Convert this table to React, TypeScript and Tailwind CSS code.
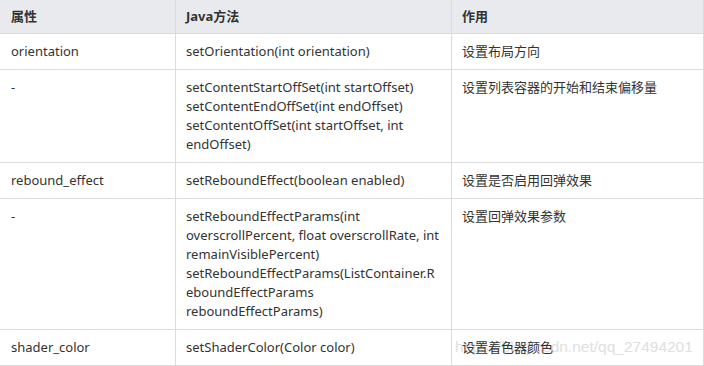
const rows: { attr: string; method: string[]; desc: string }[] = [
  { attr: 'orientation', method: ['setOrientation(int orientation)'], desc: '设置布局方向' },
  {
    attr: '-',
    method: [
      'setContentStartOffSet(int startOffset)',
      'setContentEndOffSet(int endOffset)',
      'setContentOffSet(int startOffset, int',
      'endOffset)',
    ],
    desc: '设置列表容器的开始和结束偏移量',
  },
  { attr: 'rebound_effect', method: ['setReboundEffect(boolean enabled)'], desc: '设置是否启用回弹效果' },
  {
    attr: '-',
    method: [
      'setReboundEffectParams(int',
      'overscrollPercent, float overscrollRate, int',
      'remainVisiblePercent)',
      'setReboundEffectParams(ListContainer.R',
      'eboundEffectParams',
      'reboundEffectParams)',
    ],
    desc: '设置回弹效果参数',
  },
  { attr: 'shader_color', method: ['setShaderColor(Color color)'], desc: '设置着色器颜色' },
];

const cell = 'px-[10px] py-2 border-r border-b border-[#dcdcdc]';

export default function App() {
  return (
    <div
      className="w-[704px] h-[366px] bg-white text-[13px] leading-[19px] text-[#333] overflow-hidden relative"
      style={{ fontFamily: '"Noto Sans", "Noto Sans CJK SC", sans-serif' }}
    >
      <div className="grid grid-cols-[176px_276px_252px]">
        <div className={`${cell} pl-[11px] bg-[#e9eaed] font-bold h-[34px] pt-[7px]`}>属性</div>
        <div className={`${cell} bg-[#e9eaed] font-bold h-[34px] pt-[7px]`}>Java方法</div>
        <div className={`${cell} bg-[#e9eaed] font-bold h-[34px] pt-[7px]`}>作用</div>
        {rows.map((r, i) => (
          <div key={i} className="contents">
            <div className={`${cell} pl-[11px]`}>{r.attr}</div>
            <div className={cell}>
              {r.method.map((m, j) => (
                <div key={j} className="whitespace-nowrap">{m}</div>
              ))}
            </div>
            <div className={`${cell} relative`}>
              {/* csdn watermark */}
              {i === rows.length - 1 && (
                <span
                  className="absolute left-[3px] top-[7px] text-[15.5px] leading-[19px] text-[#e0e0e0] whitespace-nowrap"
                  style={{ fontFamily: '"Liberation Sans", sans-serif' }}
                >
                  https://blog.csdn.net/qq_27494201
                </span>
              )}
              <span className="relative">{r.desc}</span>
            </div>
          </div>
        ))}
      </div>
    </div>
  );
}
